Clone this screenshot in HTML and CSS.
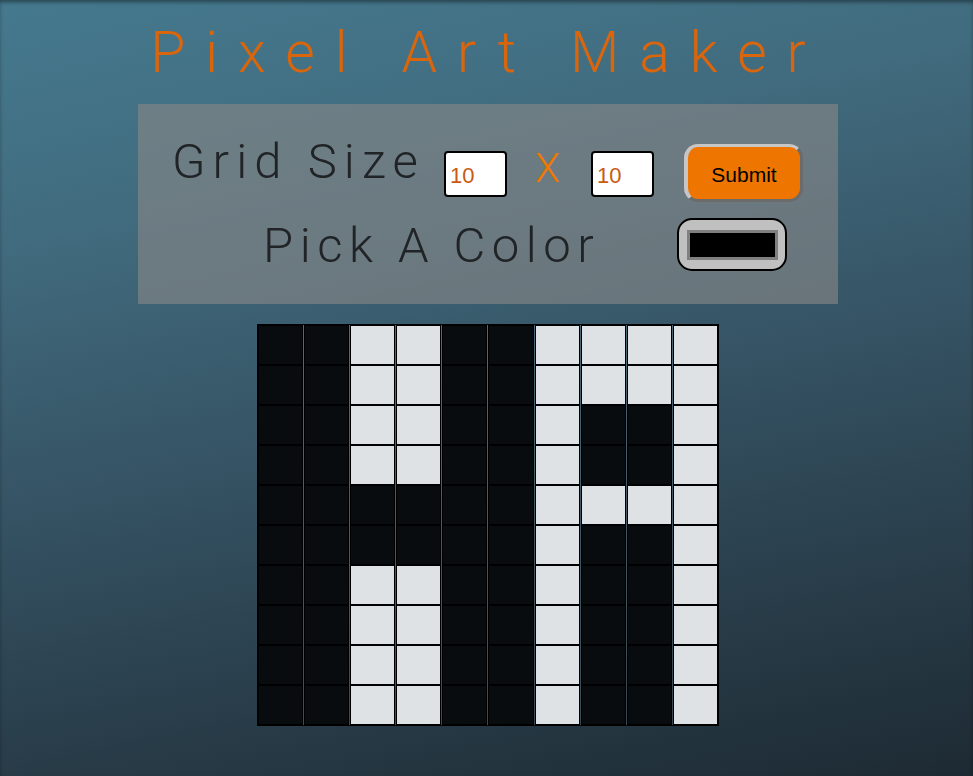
FILE: index.html
```html
<!DOCTYPE html>
<html lang="en">
<head>
<meta charset="utf-8">
<title>Pixel Art Maker</title>
<link rel="stylesheet" href="styles.css">
</head>
<body>
<h1 class="title">Pixel Art Maker</h1>
<form class="panel">
  <div class="row row-size">
    <span class="label label-size">Grid Size</span>
    <input class="num" type="number" value="10">
    <span class="times">X</span>
    <input class="num" type="number" value="10">
    <button class="submit" type="button">Submit</button>
  </div>
  <div class="row row-color">
    <span class="label label-color">Pick A Color</span>
    <div class="color"><div class="swatch"></div></div>
  </div>
</form>
<div class="canvas">
  <div class="c d"></div><div class="c d"></div><div class="c l"></div><div class="c l"></div><div class="c d"></div><div class="c d"></div><div class="c l"></div><div class="c l"></div><div class="c l"></div><div class="c l"></div>
  <div class="c d"></div><div class="c d"></div><div class="c l"></div><div class="c l"></div><div class="c d"></div><div class="c d"></div><div class="c l"></div><div class="c l"></div><div class="c l"></div><div class="c l"></div>
  <div class="c d"></div><div class="c d"></div><div class="c l"></div><div class="c l"></div><div class="c d"></div><div class="c d"></div><div class="c l"></div><div class="c d"></div><div class="c d"></div><div class="c l"></div>
  <div class="c d"></div><div class="c d"></div><div class="c l"></div><div class="c l"></div><div class="c d"></div><div class="c d"></div><div class="c l"></div><div class="c d"></div><div class="c d"></div><div class="c l"></div>
  <div class="c d"></div><div class="c d"></div><div class="c d"></div><div class="c d"></div><div class="c d"></div><div class="c d"></div><div class="c l"></div><div class="c l"></div><div class="c l"></div><div class="c l"></div>
  <div class="c d"></div><div class="c d"></div><div class="c d"></div><div class="c d"></div><div class="c d"></div><div class="c d"></div><div class="c l"></div><div class="c d"></div><div class="c d"></div><div class="c l"></div>
  <div class="c d"></div><div class="c d"></div><div class="c l"></div><div class="c l"></div><div class="c d"></div><div class="c d"></div><div class="c l"></div><div class="c d"></div><div class="c d"></div><div class="c l"></div>
  <div class="c d"></div><div class="c d"></div><div class="c l"></div><div class="c l"></div><div class="c d"></div><div class="c d"></div><div class="c l"></div><div class="c d"></div><div class="c d"></div><div class="c l"></div>
  <div class="c d"></div><div class="c d"></div><div class="c l"></div><div class="c l"></div><div class="c d"></div><div class="c d"></div><div class="c l"></div><div class="c d"></div><div class="c d"></div><div class="c l"></div>
  <div class="c d"></div><div class="c d"></div><div class="c l"></div><div class="c l"></div><div class="c d"></div><div class="c d"></div><div class="c l"></div><div class="c d"></div><div class="c d"></div><div class="c l"></div>
</div>
</body>
</html>
```
FILE: styles.css
```css
html {
  height: 100%;
}
body {
  margin: 0;
  padding: 0 0 0 3px;
  min-height: 100%;
  box-sizing: border-box;
  background: linear-gradient(168deg, #45798e 0%, #416b7e 25%, #365566 50%, #2a3f4c 75%, #1d2a33 100%);
  box-shadow: inset 0 3px 4px -1px rgba(0, 0, 0, 0.45);
  font-family: Roboto, "Liberation Sans", sans-serif;
  overflow: hidden;
}
.title {
  margin: 0;
  padding-top: 24px;
  height: 57px;
  font-size: 57px;
  line-height: 57px;
  font-weight: 300;
  color: #d9650c;
  text-align: center;
  letter-spacing: 20px;
}
.panel {
  width: 700px;
  height: 200px;
  margin: 23px auto 0;
  box-sizing: border-box;
  padding-top: 40px;
  background: rgba(135, 135, 135, 0.63);
}
.row {
  display: flex;
  align-items: flex-start;
}
.row-size {
  height: 58px;
  padding-left: 34px;
}
.row-color {
  margin-top: 16px;
  padding-left: 125px;
}
.label {
  font-size: 49px;
  line-height: 49px;
  font-weight: 300;
  color: #202427;
  white-space: nowrap;
}
.label-size {
  width: 272px;
  margin-top: -7px;
  letter-spacing: 7.1px;
}
.label-color {
  width: 414px;
  margin-top: 3px;
  letter-spacing: 6.5px;
}
.num {
  width: 63px;
  height: 46px;
  margin: 7px 0 0;
  box-sizing: border-box;
  padding: 11px 4px 7px;
  border: 2px solid #000;
  border-radius: 4px;
  background: #fff;
  color: #c95a10;
  font-family: "Liberation Sans", Arial, sans-serif;
  font-size: 22px;
  outline: none;
  -moz-appearance: textfield;
}
.num::-webkit-outer-spin-button,
.num::-webkit-inner-spin-button {
  -webkit-appearance: none;
  margin: 0;
}
.times {
  width: 84px;
  margin-top: 4px;
  padding-right: 3px;
  box-sizing: border-box;
  text-align: center;
  font-size: 41px;
  line-height: 41px;
  font-weight: 300;
  color: #ef7800;
}
.submit {
  width: 119px;
  height: 58px;
  margin-left: 30px;
  box-sizing: border-box;
  padding: 3px 0 0;
  border-style: solid;
  border-width: 3px 3px 3px 4px;
  border-color: #c6c6c6 #6b6b6b #6b6b6b #c6c6c6;
  border-radius: 14px;
  background: #ee7600;
  color: #000;
  font-family: "Liberation Sans", Arial, sans-serif;
  font-size: 21px;
}
.color {
  width: 110px;
  height: 53px;
  box-sizing: border-box;
  border: 2px solid #000;
  border-radius: 15px;
  background: #c0c0c0;
  display: flex;
  align-items: center;
  justify-content: center;
}
.swatch {
  width: 91px;
  height: 30px;
  box-sizing: border-box;
  border: 3px solid #808080;
  background: #000;
}
.canvas {
  width: 462px;
  margin: 20px auto 0;
  box-sizing: border-box;
  border: 1px solid #000;
  display: grid;
  grid-template-columns: repeat(10, 1fr);
  column-gap: 1px;
  background: rgba(255, 255, 255, 0.1);
}
.c {
  height: 40px;
  box-sizing: border-box;
  border: 1px solid #000;
}
.d {
  background: #080c0f;
}
.l {
  background: #dee2e5;
}
```
